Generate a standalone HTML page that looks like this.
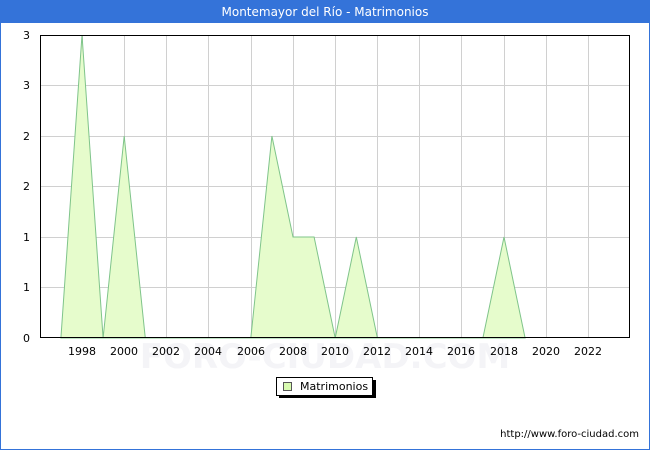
<!DOCTYPE html>
<html><head><style>
body{margin:0;width:650px;height:450px;overflow:hidden;background:#fff;font-family:"DejaVu Sans","Liberation Sans",sans-serif;}
</style></head><body>
<svg width="650" height="450" xmlns="http://www.w3.org/2000/svg" font-family="DejaVu Sans, Liberation Sans, sans-serif">
<rect x="0.5" y="0.5" width="649" height="449" fill="#fff" stroke="#3473d9"/>
<rect x="0" y="0" width="650" height="23" fill="#3473d9"/>
<text x="325" y="16" text-anchor="middle" fill="#fff" font-size="12">Montemayor del Río - Matrimonios</text>
<g stroke="#d0d0d0" stroke-width="1">
<line x1="40" y1="85.5" x2="630" y2="85.5"/><line x1="40" y1="136.5" x2="630" y2="136.5"/>
<line x1="40" y1="186.5" x2="630" y2="186.5"/><line x1="40" y1="237.5" x2="630" y2="237.5"/>
<line x1="40" y1="287.5" x2="630" y2="287.5"/>
<line x1="82.5" y1="35" x2="82.5" y2="338"/><line x1="124.5" y1="35" x2="124.5" y2="338"/>
<line x1="166.5" y1="35" x2="166.5" y2="338"/><line x1="208.5" y1="35" x2="208.5" y2="338"/>
<line x1="251.5" y1="35" x2="251.5" y2="338"/><line x1="293.5" y1="35" x2="293.5" y2="338"/>
<line x1="335.5" y1="35" x2="335.5" y2="338"/><line x1="377.5" y1="35" x2="377.5" y2="338"/>
<line x1="419.5" y1="35" x2="419.5" y2="338"/><line x1="461.5" y1="35" x2="461.5" y2="338"/>
<line x1="504.5" y1="35" x2="504.5" y2="338"/><line x1="546.5" y1="35" x2="546.5" y2="338"/>
<line x1="588.5" y1="35" x2="588.5" y2="338"/>
</g>
<text x="325" y="368" text-anchor="middle" font-size="34" fill="#f4f4f7" font-weight="bold">FORO-CIUDAD.COM</text>
<polygon points="60.9,338 82,35 103.1,338 124.2,136 145.3,338 250.8,338 271.9,136 293,237 314.1,237 335.2,338 356.3,237 377.4,338 482.9,338 504,237 525.1,338" fill="#e6fccc" stroke="#7fc48a" stroke-width="1"/>
<rect x="40.5" y="35.5" width="589" height="302" fill="none" stroke="#000"/>
<g font-size="11" fill="#000" text-anchor="end">
<text x="30" y="39">3</text><text x="30" y="89">3</text><text x="30" y="140">2</text>
<text x="30" y="190">2</text><text x="30" y="241">1</text><text x="30" y="291">1</text><text x="30" y="342">0</text>
</g>
<g font-size="11" fill="#000" text-anchor="middle">
<text x="82" y="355">1998</text><text x="124" y="355">2000</text><text x="166" y="355">2002</text>
<text x="208" y="355">2004</text><text x="251" y="355">2006</text><text x="293" y="355">2008</text>
<text x="335" y="355">2010</text><text x="377" y="355">2012</text><text x="419" y="355">2014</text>
<text x="461" y="355">2016</text><text x="504" y="355">2018</text><text x="546" y="355">2020</text>
<text x="588" y="355">2022</text>
</g>
<rect x="279" y="380" width="97" height="18" fill="#000"/>
<rect x="276.5" y="377.5" width="96" height="18" fill="#fff" stroke="#000"/>
<rect x="283.5" y="382.5" width="8" height="8" fill="#d8fbb0" stroke="#555"/>
<text x="300" y="390" font-size="11">Matrimonios</text>
<text x="639" y="437" font-size="10" text-anchor="end">http://www.foro-ciudad.com</text>
</svg>
</body></html>
